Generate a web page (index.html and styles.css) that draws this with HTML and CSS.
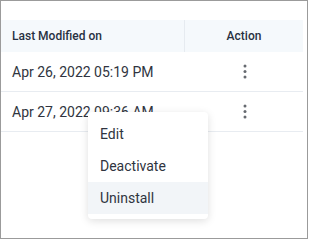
FILE: index.html
```html
<!DOCTYPE html>
<html>
<head>
<meta charset="utf-8">
<link rel="stylesheet" href="styles.css">
</head>
<body>
<div class="frame">
  <div class="table">
    <div class="row head">
      <div class="cell date">Last Modified on</div>
      <div class="cell action">Action</div>
    </div>
    <div class="row">
      <div class="cell date">Apr 26, 2022 05:19 PM</div>
      <div class="cell action">
        <svg class="kebab" width="4" height="15" viewBox="0 0 4 15"><circle cx="2" cy="2" r="1.5"/><circle cx="2" cy="7.5" r="1.5"/><circle cx="2" cy="13" r="1.5"/></svg>
      </div>
    </div>
    <div class="row">
      <div class="cell date">Apr 27, 2022 09:36 AM</div>
      <div class="cell action">
        <svg class="kebab" width="4" height="15" viewBox="0 0 4 15"><circle cx="2" cy="2" r="1.5"/><circle cx="2" cy="7.5" r="1.5"/><circle cx="2" cy="13" r="1.5"/></svg>
      </div>
    </div>
  </div>
  <ul class="menu">
    <li class="item">Edit</li>
    <li class="item">Deactivate</li>
    <li class="item hover">Uninstall</li>
  </ul>
</div>
</body>
</html>
```

FILE: styles.css
```css
html, body {
  margin: 0;
  padding: 0;
  background: #fff;
}
body {
  font-family: Roboto, "Liberation Sans", sans-serif;
  color: #2f3440;
}
.frame {
  position: relative;
  box-sizing: border-box;
  width: 308px;
  height: 239px;
  border: 1px solid #9b9b9b;
  padding: 19px 4px 0 0;
}
.table {
  display: flex;
  flex-direction: column;
}
.row {
  display: grid;
  grid-template-columns: 183px 1fr;
  height: 40px;
  box-sizing: border-box;
  border-bottom: 1px solid #e8ecf1;
  font-size: 14px;
}
.row.head {
  height: 32px;
  background: #f5f9fc;
  border-bottom: none;
  font-size: 12px;
  font-weight: 500;
  color: #283142;
}
.cell {
  display: flex;
  align-items: center;
}
.cell.date {
  padding-left: 11px;
}
.cell.action {
  justify-content: center;
}
.head .cell.action {
  border-left: 1px solid #e6ebf0;
}
.kebab {
  fill: #666a70;
  margin-left: 2px;
}
.menu {
  position: absolute;
  left: 87px;
  top: 111px;
  width: 120px;
  margin: 0;
  padding: 6px 0 5px;
  list-style: none;
  background: #fff;
  border-radius: 4px;
  box-shadow: 0 2px 8px rgba(0, 0, 0, 0.13);
}
.item {
  height: 32px;
  display: flex;
  align-items: center;
  padding-left: 12px;
  font-size: 14px;
  color: #2f3440;
}
.item.hover {
  background: #f2f5f8;
}
```
